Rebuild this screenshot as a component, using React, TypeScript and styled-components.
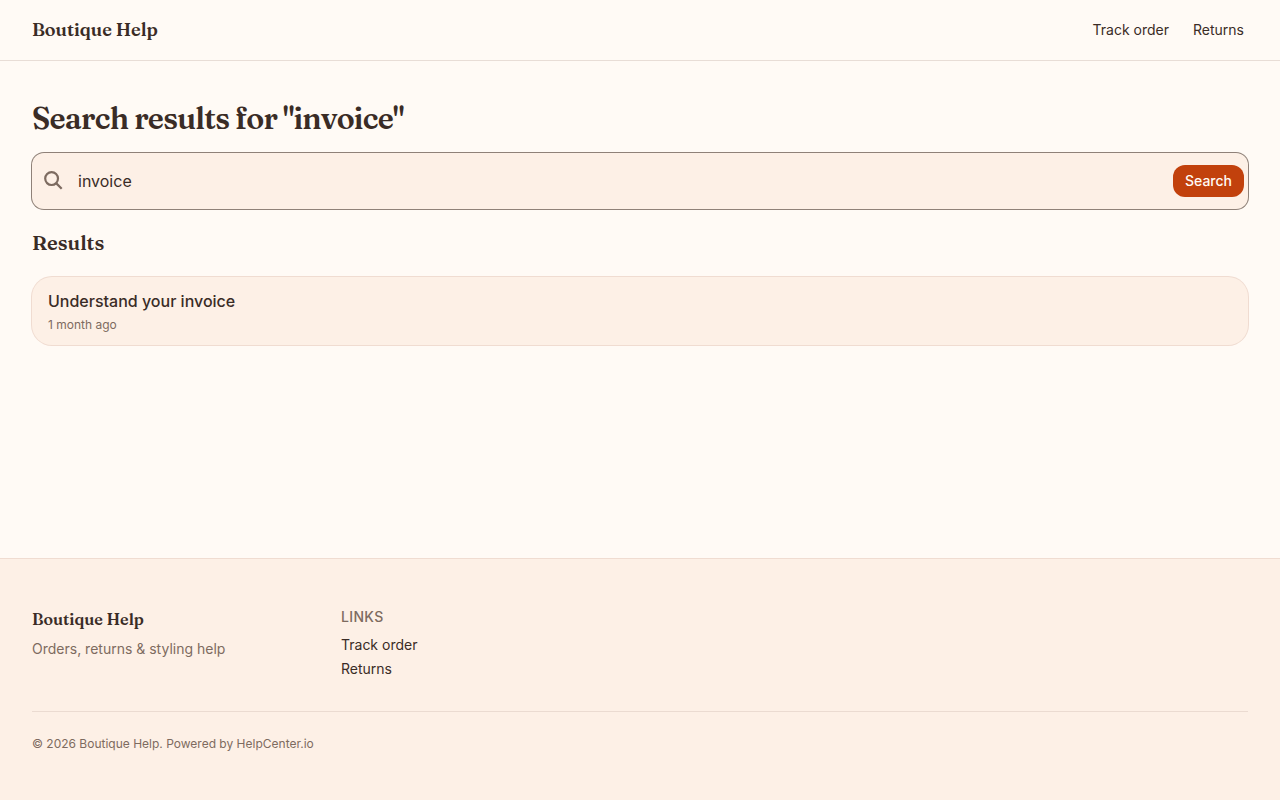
import React, { useState } from "react";
import styled, { createGlobalStyle } from "styled-components";

const color = {
  page: "#fffaf5",
  surface: "#fdf0e6",
  ink: "#3a2c26",
  muted: "#7d6b60",
  line: "#f0dcd1",
  outline: "#8f8178",
  accent: "#c2410c",
};

const serif = `Fraunces, "Liberation Serif", serif`;

const GlobalStyle = createGlobalStyle`
  *, *::before, *::after { box-sizing: border-box; }
  body {
    margin: 0;
    background: ${color.page};
    color: ${color.ink};
    font-family: Inter, sans-serif;
    font-size: 14px;
    line-height: 20px;
    -webkit-font-smoothing: antialiased;
  }
  h1, h2, h3, p, ul { margin: 0; padding: 0; }
  ul { list-style: none; }
  a { color: inherit; text-decoration: none; }
`;

const Page = styled.div`
  min-height: 100vh;
  display: flex;
  flex-direction: column;
`;

const Header = styled.header`
  display: flex;
  align-items: center;
  justify-content: space-between;
  padding: 16px 32px;
  border-bottom: 1px solid #e8ddd6;
`;

const Brand = styled.a`
  font: 600 18px/28px ${serif};
`;

const Nav = styled.nav`
  display: flex;
  gap: 16px;
`;

const NavLink = styled.a`
  padding: 0 4px;
`;

const Main = styled.main`
  flex: 1;
  padding: 40px 32px;
`;

const Title = styled.h1`
  font: 600 30px/36px ${serif};
  letter-spacing: -0.025em;
`;

const SearchForm = styled.form`
  display: flex;
  align-items: center;
  height: 56px;
  margin: 16px 0 20px;
  padding: 0 4px 0 12px;
  border-radius: 12px;
  background: ${color.surface};
  box-shadow: 0 0 0 1px ${color.outline};
`;

const SearchIcon = styled.svg`
  flex: none;
  width: 20px;
  height: 20px;
  color: ${color.muted};
`;

const SearchInput = styled.input`
  flex: 1;
  min-width: 0;
  height: 100%;
  padding: 0 14px;
  border: 0;
  outline: 0;
  background: transparent;
  color: inherit;
  font: 400 16px/24px Inter, sans-serif;
`;

const SearchButton = styled.button`
  height: 32px;
  padding: 0 12px;
  border: 0;
  border-radius: 12px;
  background: ${color.accent};
  color: ${color.page};
  font: 500 14px/20px Inter, sans-serif;
  cursor: pointer;
`;

const SectionTitle = styled.h2`
  margin-bottom: 20px;
  font: 600 20px/28px ${serif};
`;

const ResultCard = styled.a`
  display: flex;
  flex-direction: column;
  gap: 4px;
  padding: 12px 16px;
  border-radius: 20px;
  background: ${color.surface};
  box-shadow: 0 0 0 1px ${color.line};
`;

const ResultTitle = styled.h3`
  font: 500 16px/24px Inter, sans-serif;
`;

const SmallText = styled.p`
  color: ${color.muted};
  font-size: 12px;
  line-height: 16px;
`;

const Footer = styled.footer`
  padding: 48px 32px;
  border-top: 1px solid ${color.line};
  background: ${color.surface};
`;

const FooterColumns = styled.div`
  display: grid;
  grid-template-columns: repeat(4, 1fr);
  gap: 20px;
  padding-bottom: 32px;
`;

const FooterColumn = styled.div`
  display: flex;
  flex-direction: column;
  gap: 8px;
`;

const FooterBrand = styled.a`
  font: 600 16px/24px ${serif};
`;

const Tagline = styled.p`
  color: ${color.muted};
`;

const FooterHeading = styled.h3`
  color: ${color.muted};
  font-size: 14px;
  font-weight: 500;
  letter-spacing: 0.025em;
  text-transform: uppercase;
`;

const FooterLinks = styled.ul`
  display: flex;
  flex-direction: column;
  gap: 4px;
`;

const Legal = styled.div`
  padding-top: 24px;
  border-top: 1px solid #ebdbd1;
`;

const links = [
  { label: "Track order", href: "#track-order" },
  { label: "Returns", href: "#returns" },
];

const results = [{ title: "Understand your invoice", updated: "1 month ago", href: "#invoice" }];

export default function App() {
  const [query, setQuery] = useState("invoice");

  return (
    <Page>
      <GlobalStyle />
      <Header>
        <Brand href="#">Boutique Help</Brand>
        <Nav aria-label="Main">
          {links.map((link) => (
            <NavLink key={link.href} href={link.href}>{link.label}</NavLink>
          ))}
        </Nav>
      </Header>

      <Main>
        <Title>Search results for "invoice"</Title>
        <SearchForm role="search" onSubmit={(event) => event.preventDefault()}>
          <SearchIcon viewBox="0 0 20 20" fill="none" stroke="currentColor" strokeWidth="2.2" aria-hidden="true">
            <circle cx="7.6" cy="7.6" r="6.4" />
            <path d="M12.1 12.1l5.6 5.6" />
          </SearchIcon>
          <SearchInput
            type="text"
            aria-label="Search articles"
            value={query}
            onChange={(event) => setQuery(event.target.value)}
          />
          <SearchButton type="submit">Search</SearchButton>
        </SearchForm>
        <SectionTitle>Results</SectionTitle>
        {results.map((result) => (
          <ResultCard key={result.href} href={result.href}>
            <ResultTitle>{result.title}</ResultTitle>
            <SmallText>{result.updated}</SmallText>
          </ResultCard>
        ))}
      </Main>

      <Footer>
        <FooterColumns>
          <FooterColumn>
            <FooterBrand href="#">Boutique Help</FooterBrand>
            <Tagline>Orders, returns &amp; styling help</Tagline>
          </FooterColumn>
          <FooterColumn>
            <FooterHeading>Links</FooterHeading>
            <FooterLinks>
              {links.map((link) => (
                <li key={link.href}><a href={link.href}>{link.label}</a></li>
              ))}
            </FooterLinks>
          </FooterColumn>
        </FooterColumns>
        <Legal>
          <SmallText>© 2026 Boutique Help. Powered by <a href="#helpcenter">HelpCenter.io</a></SmallText>
        </Legal>
      </Footer>
    </Page>
  );
}
